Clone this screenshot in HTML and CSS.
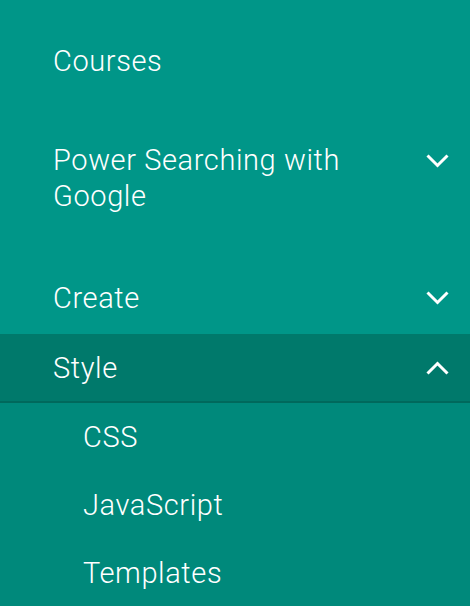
FILE: index.html
```html
<!DOCTYPE html>
<html lang="en">
<head>
<meta charset="utf-8">
<title>Menu</title>
<link rel="stylesheet" href="styles.css">
</head>
<body>
<nav class="menu">
  <div class="item item-courses">
    <span class="label">Courses</span>
  </div>
  <div class="item item-power">
    <span class="label">Power Searching with Google</span>
    <span class="icon"><svg width="23" height="14" viewBox="0 0 23 14"><polyline points="1.5,1.5 11.5,11.5 21.5,1.5" fill="none" stroke="#fff" stroke-width="3"/></svg></span>
  </div>
  <div class="item item-create">
    <span class="label">Create</span>
    <span class="icon"><svg width="23" height="14" viewBox="0 0 23 14"><polyline points="1.5,1.5 11.5,11.5 21.5,1.5" fill="none" stroke="#fff" stroke-width="3"/></svg></span>
  </div>
  <div class="item item-style">
    <span class="label">Style</span>
    <span class="icon"><svg width="23" height="14" viewBox="0 0 23 14"><polyline points="1.5,12.5 11.5,2.5 21.5,12.5" fill="none" stroke="#fff" stroke-width="3"/></svg></span>
  </div>
  <div class="submenu">
    <div class="subitem">CSS</div>
    <div class="subitem">JavaScript</div>
    <div class="subitem">Templates</div>
  </div>
</nav>
</body>
</html>
```

FILE: styles.css
```css
html, body {
  margin: 0;
  padding: 0;
  background: #009688;
}
body {
  font-family: Roboto, "Liberation Sans", sans-serif;
  font-weight: 300;
  color: #ffffff;
  font-size: 29px;
  letter-spacing: 0.6px;
  line-height: 36px;
}
.menu {
  width: 470px;
  height: 606px;
  overflow: hidden;
}
.item {
  display: flex;
  align-items: flex-start;
  padding-left: 53px;
  padding-right: 21px;
}
.label {
  flex: 1;
  max-width: 310px;
}
.icon {
  width: 23px;
  height: 36px;
  display: flex;
  align-items: center;
  justify-content: center;
  margin-left: auto;
}
.icon svg {
  display: block;
}
.item-courses {
  padding-top: 43px;
  padding-bottom: 21px;
}
.item-power {
  padding-top: 42px;
  padding-bottom: 30px;
}
.item-power .icon {
  margin-top: 1px;
}
.item-create {
  padding-top: 36px;
  padding-bottom: 18px;
}
.item-style {
  background: #00796b;
  padding-top: 16px;
  padding-bottom: 15px;
  border-bottom: 2px solid #00695c;
}
.submenu {
  background: #00897b;
}
.subitem {
  padding: 16px 20px 16px 83px;
}
```
